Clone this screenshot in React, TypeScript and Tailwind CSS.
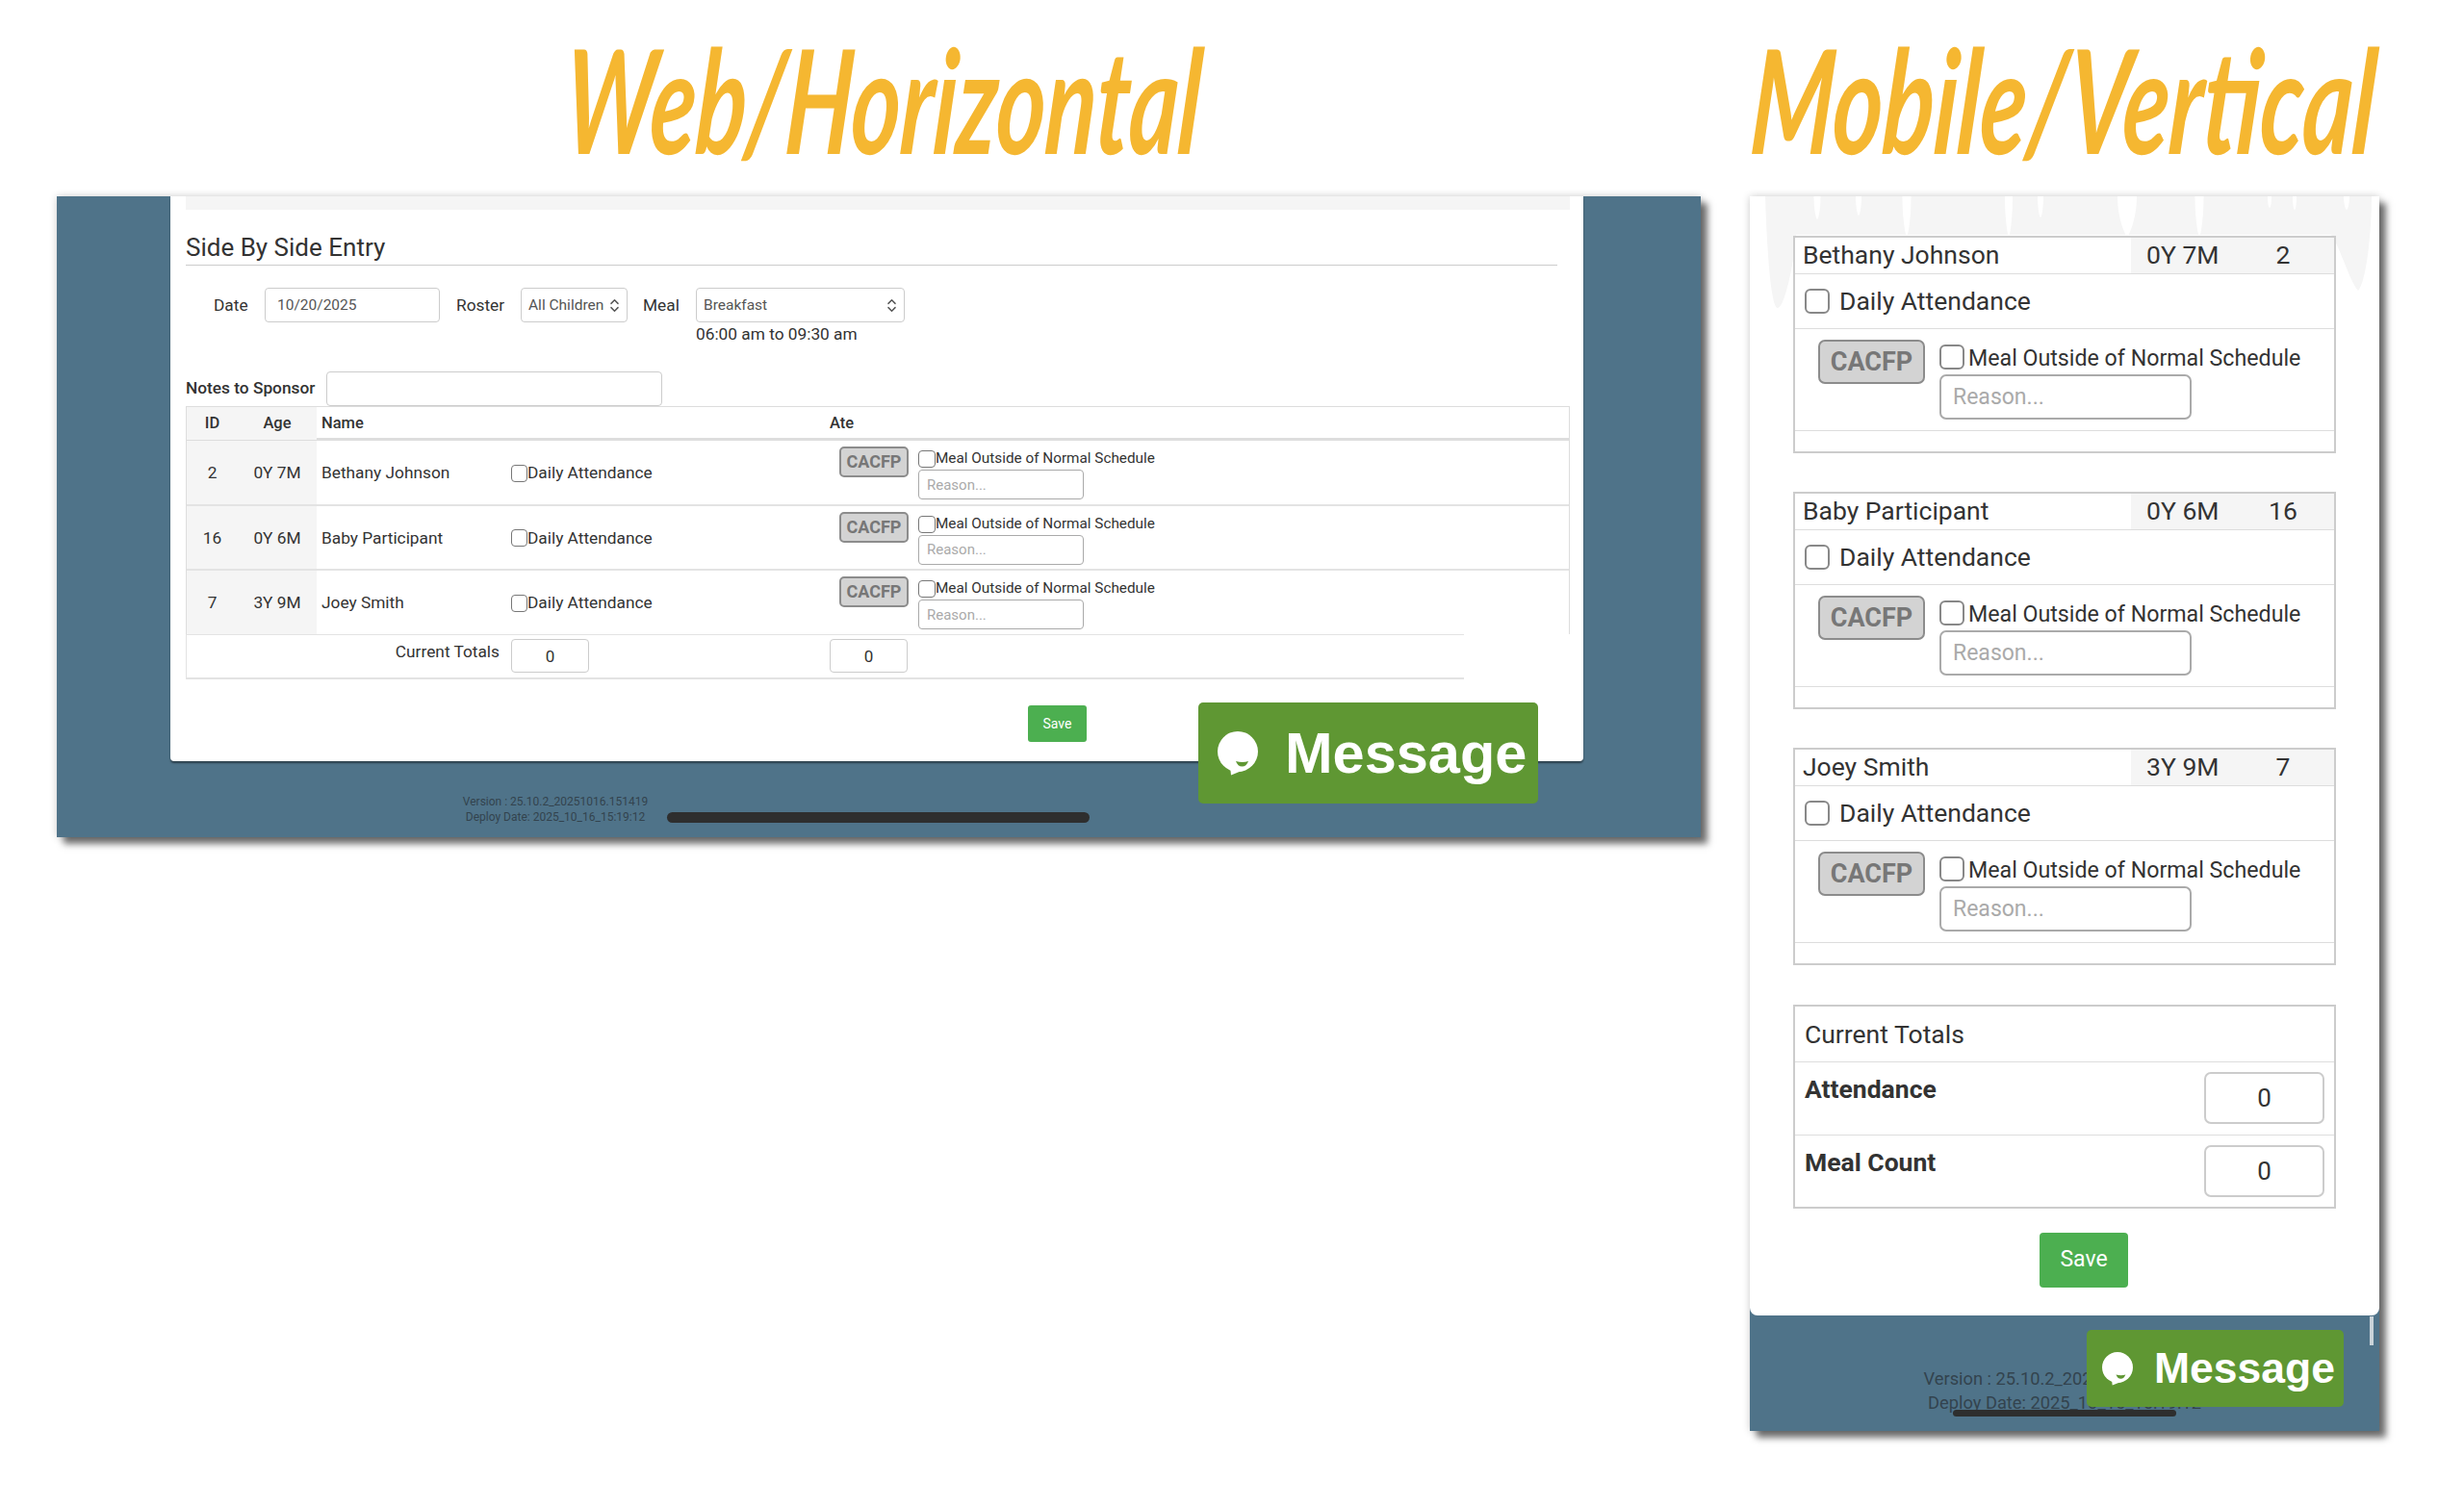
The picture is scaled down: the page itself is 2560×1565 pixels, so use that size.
import { ChevronsUpDown } from 'lucide-react';

const children = [
  { id: '2', age: '0Y 7M', name: 'Bethany Johnson' },
  { id: '16', age: '0Y 6M', name: 'Baby Participant' },
  { id: '7', age: '3Y 9M', name: 'Joey Smith' },
];

// white gaps in the grey smear along the top of the phone capture: [x, width, depth]
const drips = [
  [70, 7, 24], [113, 6, 20], [163, 9, 42], [269, 8, 42], [302, 6, 22],
  [392, 20, 42], [467, 9, 42], [540, 4, 12], [566, 4, 14], [620, 6, 14],
];

function Bubble({ className }: { className: string }) {
  return (
    <svg viewBox="0 0 42 46" className={className}>
      <circle cx="21" cy="21" r="21" fill="#fff" />
      <path d="M13 36 L14 45.5 L30 39 Z" fill="#fff" />
      <path d="M19 31 Q26 33 32 31 Q30 36.5 25.5 36.5 Q21 36.5 19 31 Z" fill="#5f9733" />
    </svg>
  );
}

function WebRow({ child }: { child: (typeof children)[number] }) {
  return (
    <div className="grid h-[67.5px] grid-cols-[53px_82px_202px_331px_1fr] border-b-2 border-[#e3e3e3] text-[17.3px] leading-none text-[#333] last:h-[66px] last:border-b-0">
      <div className="flex items-center justify-center bg-[#f5f5f5] pt-[2px]">{child.id}</div>
      <div className="flex items-center justify-center bg-[#f5f5f5] pt-[2px]">{child.age}</div>
      <div className="flex items-center pl-[5px] pt-[2px]">{child.name}</div>
      <div className="flex items-center pt-[2px]">
        <input type="checkbox" className="h-[18px] w-[17px] appearance-none rounded-[4px] border border-[#777] bg-white" />
        <span>Daily Attendance</span>
      </div>
      <div className="flex gap-[10px] pl-[10px] pt-[6px]">
        <button className="h-[32px] w-[72px] rounded-[5px] border-2 border-[#8c8c8c] bg-[#d3d3d3] text-[18px] font-bold text-[#777]">CACFP</button>
        <div>
          <div className="flex h-[24px] items-center pt-[2px] text-[15.3px]">
            <input type="checkbox" className="h-[18px] w-[18px] appearance-none rounded-[4px] border border-[#777] bg-white" />
            <span>Meal Outside of Normal Schedule</span>
          </div>
          <input placeholder="Reason..." className="h-[31px] w-[172px] rounded-[4px] border border-[#aaa] px-[8px] text-[15px] placeholder:text-[#aaa]" />
        </div>
      </div>
    </div>
  );
}

function WebPanel() {
  return (
    <div className="relative h-[666px] w-[1708px] bg-[#4f7389] shadow-[7px_7px_7px_rgba(0,0,0,0.55),0_0_8px_rgba(0,0,0,0.2)]">
      <div className="ml-[118px] h-[587px] w-[1468px] rounded-b-[4px] bg-white pl-[16px] text-[#333] shadow-[0_2px_2px_rgba(0,0,0,0.45)]">
        <div className="h-[14px] w-[1438px] bg-[#f5f5f5]" />
        <h2 className="mt-[24px] box-content h-[33px] w-[1425px] border-b border-[#ccc] text-[26px] leading-[30px]">Side By Side Entry</h2>

        <div className="mt-[23px] flex h-[86px] items-start text-[17.3px] leading-[36px]">
          <span className="ml-[29px] w-[53px]">Date</span>
          <input readOnly value="10/20/2025" className="h-[36px] w-[182px] rounded-[4px] border border-[#ccc] px-[12px] text-[15.5px] text-[#555]" />
          <span className="ml-[17px] w-[67px]">Roster</span>
          <div className="flex h-[36px] w-[111px] items-center justify-between rounded-[4px] border border-[#ccc] pl-[7px] pr-[4px] text-[15.5px] text-[#555]">
            All Children
            <ChevronsUpDown className="h-[17px] w-[17px]" strokeWidth={2} />
          </div>
          <span className="ml-[16px] w-[55px]">Meal</span>
          <div>
            <div className="flex h-[36px] w-[217px] items-center justify-between rounded-[4px] border border-[#ccc] pl-[7px] pr-[4px] text-[15.5px] text-[#555]">
              Breakfast
              <ChevronsUpDown className="h-[17px] w-[17px]" strokeWidth={2} />
            </div>
            <div className="leading-[25px]">06:00 am to 09:30 am</div>
          </div>
        </div>

        <div className="flex h-[37px] items-center">
          <span className="w-[146px] text-[17.3px] font-medium">Notes to Sponsor</span>
          <input className="h-[36px] w-[349px] rounded-[4px] border border-[#ccc]" />
        </div>

        <div className="w-[1438px] border-x border-t border-[#ddd]">
          <div className="grid h-[35px] grid-cols-[53px_82px_202px_331px_1fr] items-stretch border-b-[3px] border-[#ddd] text-[16.5px] font-medium leading-[34px] text-[#333]">
            <div className="bg-[#f5f5f5] text-center">ID</div>
            <div className="bg-[#f5f5f5] text-center">Age</div>
            <div className="pl-[5px]">Name</div>
            <div />
            <div>Ate</div>
          </div>
          {children.map((child) => (
            <WebRow key={child.id} child={child} />
          ))}
        </div>

        <div className="grid h-[47px] w-[1328px] grid-cols-[337px_331px_1fr] border-b-2 border-l border-t border-[#e3e3e3] pt-[4px] text-[17.3px] text-[#333]">
          <div className="pr-[12px] text-right leading-[26px]">Current Totals</div>
          <input readOnly value="0" className="h-[35px] w-[81px] rounded-[4px] border border-[#ccc] text-center text-[17px]" />
          <input readOnly value="0" className="h-[35px] w-[81px] rounded-[4px] border border-[#ccc] text-center text-[17px]" />
        </div>

        <button className="ml-[875px] mt-[27px] h-[38px] w-[61px] rounded-[3px] bg-[#4caf50] text-[14px] text-white">Save</button>
      </div>

      <div className="w-[615px] whitespace-nowrap pl-[421px] pt-[34px] text-center text-[12px] leading-[16px] text-[#33434e]">
        <div className="w-[194px]">Version : 25.10.2_20251016.151419</div>
        <div className="w-[194px]">Deploy Date: 2025_10_16_15:19:12</div>
      </div>
      <div className="absolute left-[634px] top-[640px] h-[11px] w-[439px] rounded-full bg-[#2e2e2e]" />

      <div className="absolute left-[1186px] top-[526px] flex h-[105px] w-[353px] items-center gap-[28px] rounded-[5px] bg-[#5f9733] pl-[20px] [font-family:'Liberation_Sans',sans-serif] text-[59.5px] font-bold text-white">
        <Bubble className="h-[46px] w-[42px]" />
        Message
      </div>
    </div>
  );
}

function MobileCard({ child }: { child: (typeof children)[number] }) {
  return (
    <div className="relative h-[226px] w-[564px] border-2 border-[#ccc] bg-white text-[#333]">
      <div className="flex h-[38px] border-b border-[#ddd] text-[26.5px] leading-[36px]">
        <div className="w-[349px] pl-[8px]">{child.name}</div>
        <div className="flex flex-1 bg-[#f5f5f5]">
          <div className="w-[123px] pl-[16px]">{child.age}</div>
          <div className="w-[70px] text-center">{child.id}</div>
        </div>
      </div>
      <div className="flex h-[57px] items-center gap-[10px] border-b border-[#ddd] pl-[10px] text-[26.5px]">
        <input type="checkbox" className="h-[26px] w-[26px] appearance-none rounded-[6px] border-2 border-[#888] bg-white" />
        <span>Daily Attendance</span>
      </div>
      <div className="flex h-[106px] gap-[15px] border-b border-[#ddd] pl-[24px] pt-[11px]">
        <button className="h-[46px] w-[111px] rounded-[7px] border-2 border-[#8c8c8c] bg-[#d3d3d3] text-[27px] font-bold text-[#777]">CACFP</button>
        <div>
          <div className="flex h-[36px] items-center gap-[4px] text-[23.2px]">
            <input type="checkbox" className="h-[26px] w-[26px] appearance-none rounded-[6px] border-2 border-[#888] bg-white" />
            <span className="whitespace-nowrap pt-[3px]">Meal Outside of Normal Schedule</span>
          </div>
          <input placeholder="Reason..." className="h-[47px] w-[262px] rounded-[7px] border-2 border-[#aaa] px-[12px] text-[23px] placeholder:text-[#aaa]" />
        </div>
      </div>
    </div>
  );
}

function MobilePanel() {
  return (
    <div className="relative h-[1283px] w-[654px] bg-[#4f7389] shadow-[7px_7px_7px_rgba(0,0,0,0.55),0_0_8px_rgba(0,0,0,0.2)]">
      <div className="relative h-[1163px] rounded-b-[8px] bg-white pl-[45px] pt-[41px]">
        <svg viewBox="0 0 655 120" className="absolute left-0 top-0 h-[120px] w-[655px]">
          <path d="M16 0 H646 C646 40 640 90 632 98 C624 90 612 50 604 40 H48 C46 70 36 116 29 116 C22 116 18 60 16 0 Z" fill="#f5f5f5" />
          {drips.map(([x, w, d]) => (
            <path key={x} d={`M${x - w / 2} 0 C${x - w / 2} ${d * 0.6} ${x - 1} ${d} ${x} ${d} C${x + 1} ${d} ${x + w / 2} ${d * 0.6} ${x + w / 2} 0 Z`} fill="#fff" />
          ))}
        </svg>
        <div className="flex flex-col gap-[40px]">
          {children.map((child) => (
            <MobileCard key={child.id} child={child} />
          ))}
        </div>
        <div className="relative mt-[41px] h-[212px] w-[564px] border-2 border-[#ccc] bg-white text-[26.5px] text-[#333]">
          <div className="flex h-[58px] items-center border-b border-[#ddd] pl-[10px]">Current Totals</div>
          <div className="flex h-[76px] justify-between border-b border-[#ddd] pl-[10px] pr-[10px] pt-[10px]">
            <span className="font-bold leading-[36px]">Attendance</span>
            <input readOnly value="0" className="h-[54px] w-[125px] rounded-[7px] border-2 border-[#ccc] text-center text-[26px]" />
          </div>
          <div className="flex h-[74px] justify-between pl-[10px] pr-[10px] pt-[10px]">
            <span className="font-bold leading-[36px]">Meal Count</span>
            <input readOnly value="0" className="h-[54px] w-[125px] rounded-[7px] border-2 border-[#ccc] text-center text-[26px]" />
          </div>
        </div>
        <button className="ml-[256px] mt-[25px] h-[57px] w-[92px] rounded-[4px] bg-[#4caf50] text-[23px] text-white">Save</button>
      </div>

      <div className="pt-[53px] text-center text-[18.3px] leading-[25px] text-[#33434e]">
        <div>Version : 25.10.2_20251016.151419</div>
        <div>Deploy Date: 2025_10_16_15:19:12</div>
      </div>
      <div className="absolute left-[211px] top-[1261px] h-[7px] w-[232px] rounded-full bg-[#2e2e2e]" />
      <div className="absolute left-[644px] top-[1164px] h-[30px] w-[4px] bg-[#c9d3d9]" />

      <div className="absolute left-[350px] top-[1178px] flex h-[80px] w-[267px] items-center gap-[22px] rounded-[5px] bg-[#5f9733] pl-[16px] [font-family:'Liberation_Sans',sans-serif] text-[44.5px] font-bold text-white">
        <Bubble className="h-[35px] w-[32px]" />
        Message
      </div>
    </div>
  );
}

export default function App() {
  return (
    <div className="flex h-[1565px] w-[2560px] gap-[51px] overflow-hidden bg-white pl-[59px] [font-family:Roboto,sans-serif]">
      <div className="w-[1708px]">
        <div className="flex h-[204px] items-center justify-center pl-[10px]">
          <h1 className="shrink-0 -skew-x-6 scale-x-[0.65] whitespace-nowrap [font-family:Lato,sans-serif] text-[150px] font-bold italic leading-none text-[#f5b731]">Web/Horizontal</h1>
        </div>
        <WebPanel />
      </div>
      <div className="w-[654px]">
        <div className="flex h-[204px] items-center justify-center">
          <h1 className="shrink-0 -skew-x-6 scale-x-[0.66] whitespace-nowrap [font-family:Lato,sans-serif] text-[150px] font-bold italic leading-none text-[#f5b731]">Mobile/Vertical</h1>
        </div>
        <MobilePanel />
      </div>
    </div>
  );
}
